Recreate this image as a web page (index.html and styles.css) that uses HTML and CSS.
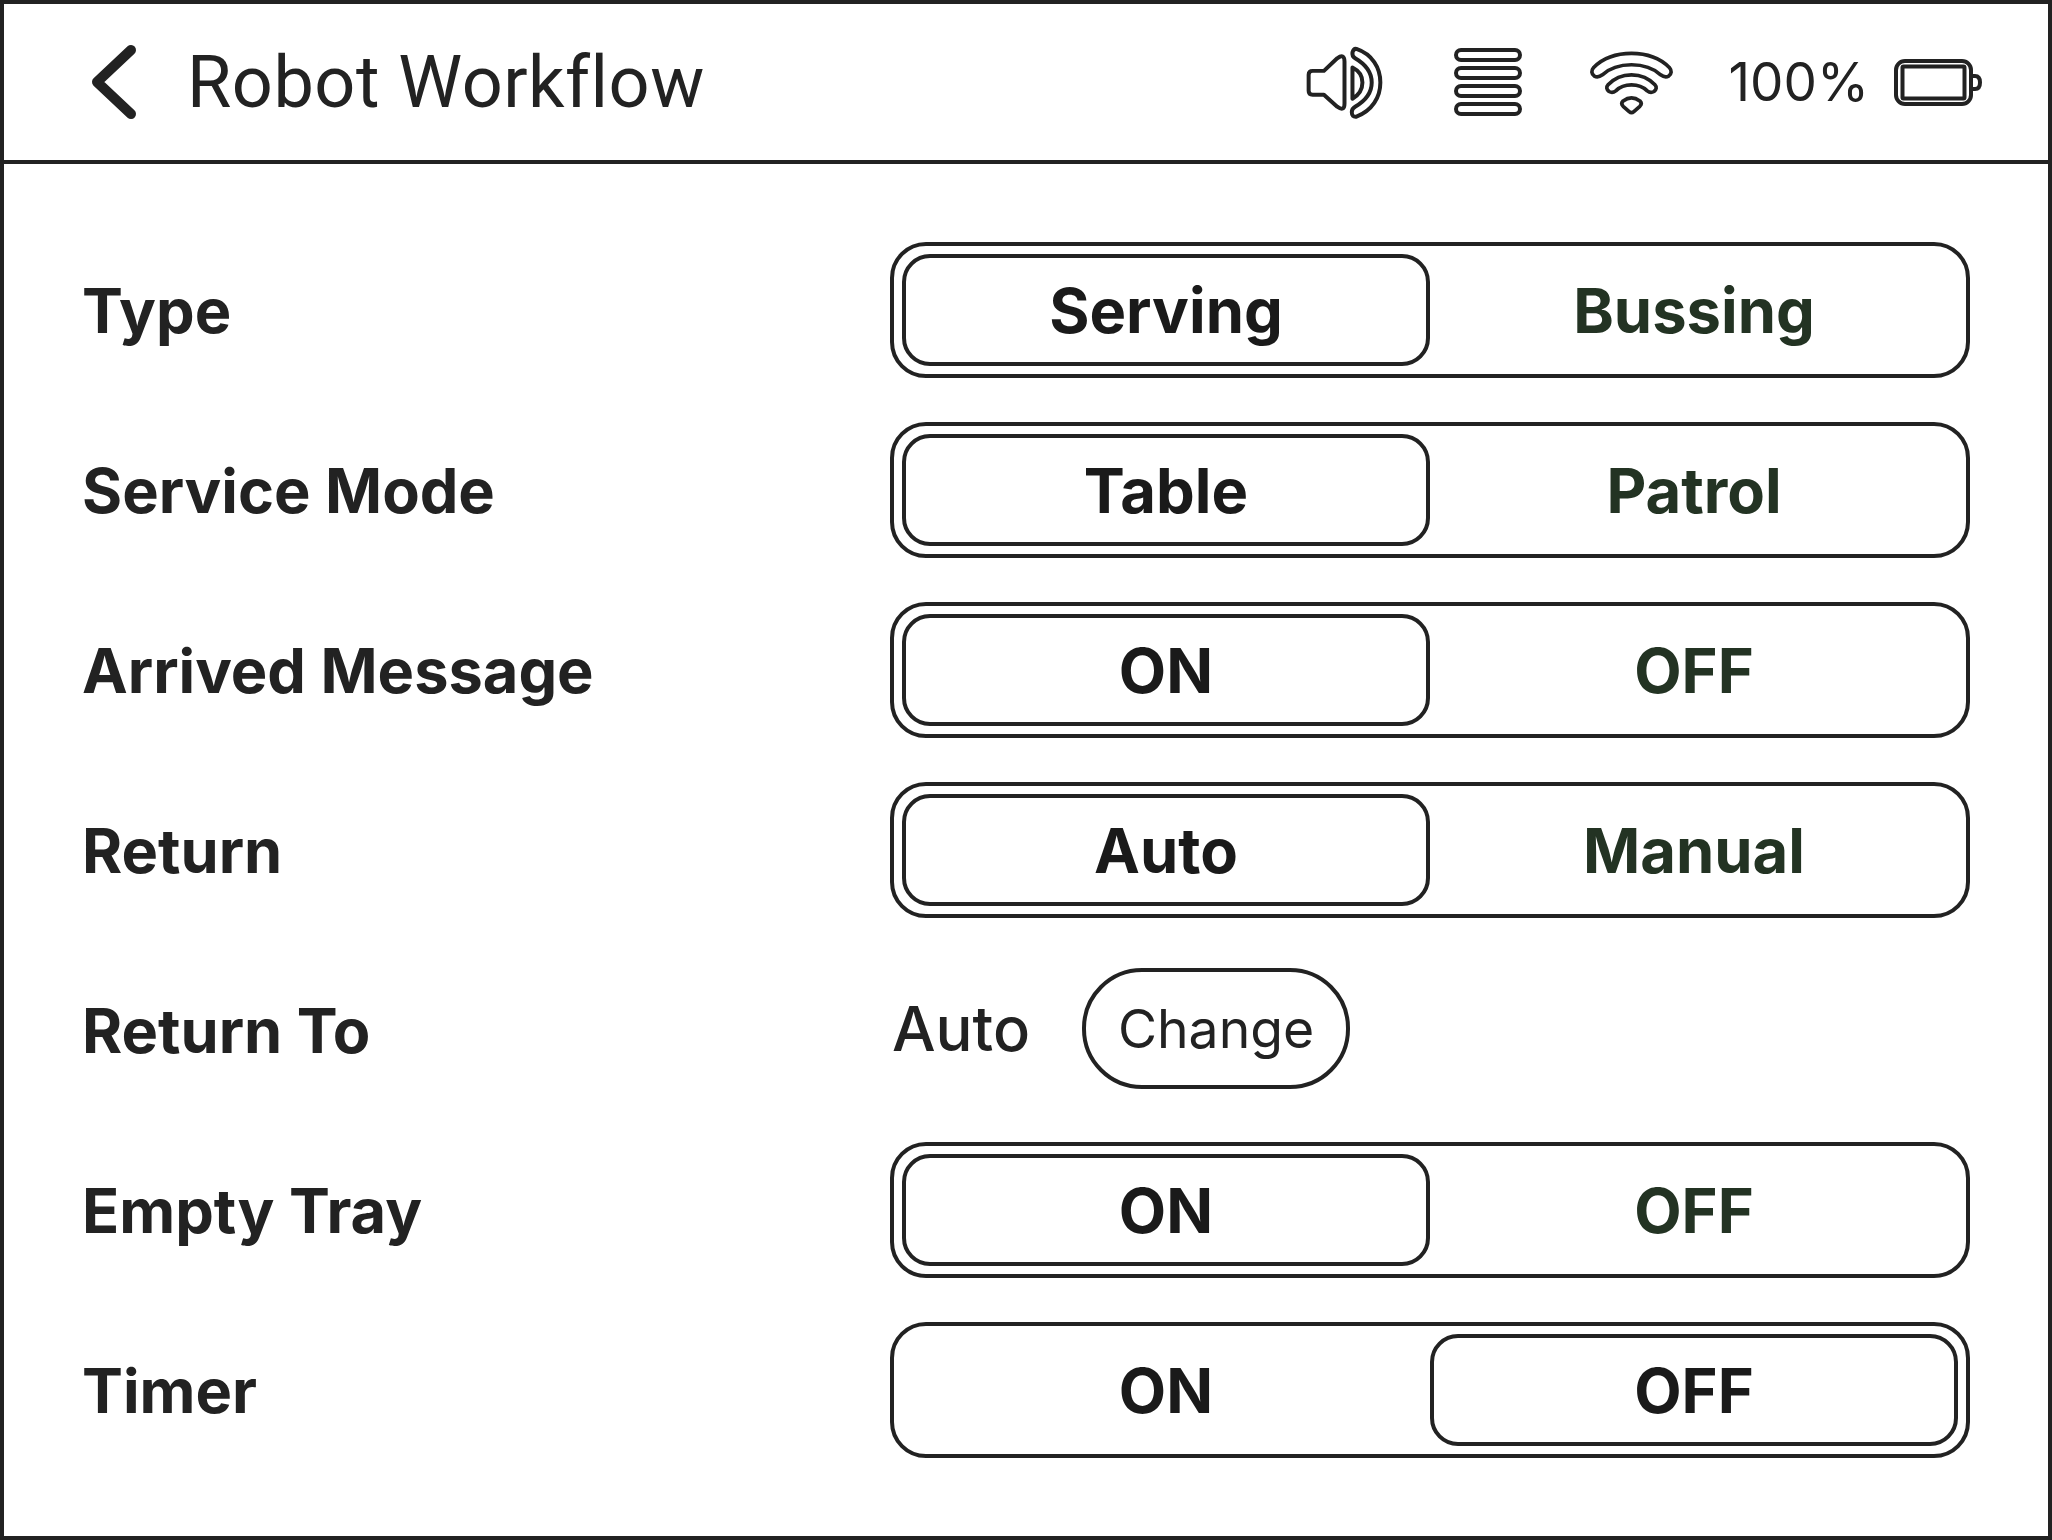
FILE: index.html
```html
<!DOCTYPE html>
<html lang="en">
<head>
<meta charset="utf-8">
<title>Robot Workflow</title>
<link rel="stylesheet" href="styles.css">
</head>
<body>
<div class="screen">
  <header class="topbar">
    <div class="title-group">
      <svg class="back" viewBox="0 0 50 80" aria-hidden="true"><path d="M42 8 L8 40 L42 72"/></svg>
      <h1 class="title">Robot Workflow</h1>
    </div>
    <div class="status">
      <svg class="ic-speaker" viewBox="100 70 244 230" aria-hidden="true">
        <path d="M126 150 H160 L200 112 Q222 96 222 122 V248 Q222 274 200 258 L160 222 H126 Q114 222 114 210 V162 Q114 150 126 150Z"/>
        <path d="M246 140 C266 150 276 165 276 185 C276 205 266 222 246 234 Z"/>
        <path d="M258 84 C305 100 330 140 330 185 C330 230 305 270 258 288 Q244 290 244 274 Q244 264 254 258 C285 240 304 215 304 185 C304 155 285 130 254 112 Q244 106 246 94 Q250 82 258 84Z"/>
      </svg>
      <svg class="ic-stack" viewBox="0 0 68 68" aria-hidden="true">
        <rect x="2" y="2" width="64" height="10" rx="5"/>
        <rect x="2" y="20" width="64" height="10" rx="5"/>
        <rect x="2" y="38" width="64" height="10" rx="5"/>
        <rect x="2" y="56" width="64" height="10" rx="5"/>
      </svg>
      <svg class="ic-wifi" viewBox="55 85 260 200" aria-hidden="true">
        <path d="M72 140 C100 112 140 98 185 98 C230 98 270 112 298 140 Q310 155 296 166 Q285 172 272 162 C250 142 220 132 185 132 C150 132 120 142 98 162 Q85 172 74 166 Q60 155 72 140Z"/>
        <path d="M115 192 C135 170 160 162 185 162 C210 162 235 170 255 192 Q264 202 252 212 Q242 218 232 210 C220 198 202 192 185 192 C168 192 150 198 138 210 Q128 218 118 212 Q106 202 115 192Z"/>
        <path d="M160 240 Q185 222 210 240 Q218 248 210 256 L192 272 Q185 278 178 272 L160 256 Q152 248 160 240Z"/>
      </svg>
      <span class="percent">100%</span>
      <svg class="ic-battery" viewBox="0 0 88 47" aria-hidden="true">
        <rect x="2" y="2" width="75" height="43" rx="9"/>
        <rect x="8.500" y="7.500" width="62" height="32" rx="1"/>
        <path d="M79 17 H81 Q86 17 86 23.500 Q86 30 81 30 H79"/>
      </svg>
    </div>
  </header>
  <main class="settings">
    <div class="row">
      <div class="label">Type</div>
      <div class="segmented"><div class="seg active">Serving</div><div class="seg">Bussing</div></div>
    </div>
    <div class="row">
      <div class="label">Service Mode</div>
      <div class="segmented"><div class="seg active">Table</div><div class="seg">Patrol</div></div>
    </div>
    <div class="row">
      <div class="label">Arrived Message</div>
      <div class="segmented"><div class="seg active">ON</div><div class="seg">OFF</div></div>
    </div>
    <div class="row">
      <div class="label">Return</div>
      <div class="segmented"><div class="seg active">Auto</div><div class="seg">Manual</div></div>
    </div>
    <div class="row">
      <div class="label">Return To</div>
      <div class="value-group"><span class="value">Auto</span><button class="pill">Change</button></div>
    </div>
    <div class="row">
      <div class="label">Empty Tray</div>
      <div class="segmented"><div class="seg active">ON</div><div class="seg">OFF</div></div>
    </div>
    <div class="row">
      <div class="label">Timer</div>
      <div class="segmented"><div class="seg plain">ON</div><div class="seg active">OFF</div></div>
    </div>
  </main>
</div>
</body>
</html>
```
FILE: styles.css
```css
* { box-sizing: border-box; }
html, body { margin: 0; padding: 0; background: #fff; }
body { font-family: Inter, "Liberation Sans", sans-serif; color: #222; }
.screen { width: 2052px; height: 1540px; border: 4px solid #222; display: flex; flex-direction: column; background: #fff; }
.topbar { height: 160px; flex: none; border-bottom: 4px solid #222; display: flex; align-items: center; justify-content: space-between; padding: 0 66px 0 85px; }
.title-group { display: flex; align-items: center; gap: 48px; }
.back { width: 50px; height: 80px; fill: none; stroke: #222; stroke-width: 10; stroke-linecap: round; stroke-linejoin: round; }
.title { margin: 0; padding-top: 2px; font-family: Roboto, sans-serif; font-weight: 450; font-size: 72px; letter-spacing: 0.5px; line-height: 1; color: #222; }
.status { display: flex; align-items: center; }
.status svg { fill: none; stroke: #222; stroke-linejoin: round; flex: none; }
.ic-speaker { width: 81px; height: 77px; stroke-width: 12; margin-right: 69px; }
.ic-stack { width: 68px; height: 68px; stroke-width: 4; margin-right: 66px; }
.ic-wifi { width: 87px; height: 67px; stroke-width: 11; margin-right: 54px; }
.percent { font-size: 53px; line-height: 1; font-weight: 400; margin-right: 25px; }
.ic-battery { width: 88px; height: 47px; stroke-width: 4; }
.settings { flex: 1; display: flex; flex-direction: column; padding: 56px 74px 0 78px; }
.row { height: 180px; flex: none; display: flex; align-items: center; }
.label { width: 808px; flex: none; padding-top: 2px; font-size: 61.3px; font-weight: 700; color: #222; }
.segmented { width: 1080px; height: 136px; border: 4px solid #222; border-radius: 36px; padding: 8px; display: grid; grid-template-columns: 1fr 1fr; }
.seg { display: flex; align-items: center; justify-content: center; font-size: 61.5px; font-weight: 700; color: #233323; border-radius: 28px; }
.seg.active { color: #1a1a1a; border: 4px solid #222; }
.seg.plain { color: #1a1a1a; }
.value-group { display: flex; align-items: center; gap: 52px; margin-bottom: 3px; }
.value { font-size: 61.5px; font-weight: 500; color: #222; margin-left: 2px; }
.pill { width: 268px; height: 121px; border: 4px solid #222; border-radius: 60px; background: #fff; font-family: inherit; font-size: 53.5px; font-weight: 400; color: #222; padding: 0; }
```
